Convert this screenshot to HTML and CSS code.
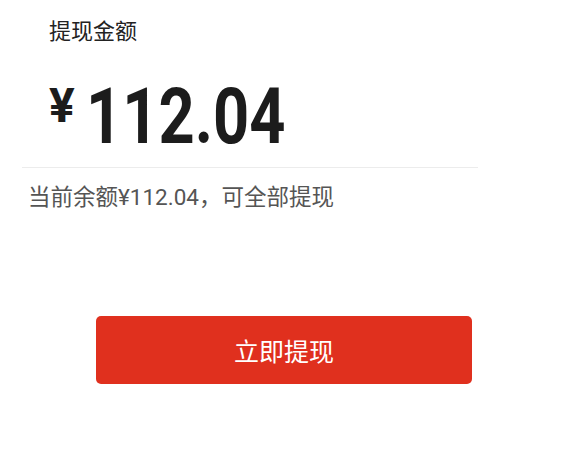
FILE: index.html
```html
<!DOCTYPE html>
<html lang="zh-CN">
<head>
    <meta charset="UTF-8">
    <meta name="viewport" content="width=device-width, initial-scale=1.0">
    <title>提现</title>
    <link rel="stylesheet" href="styles.css">
</head>
<body>
    <section class="withdraw">
        <div class="withdraw-label">提现金额</div>
        <div class="amount">
            <span class="amount-currency">¥</span>
            <span class="amount-value">112.04</span>
        </div>
        <div class="balance">当前余额¥112.04，可全部提现</div>
    </section>

    <div class="actions">
        <button class="submit-btn">立即提现</button>
    </div>
</body>
</html>
```

FILE: styles.css
```css
* {
    margin: 0;
    padding: 0;
    box-sizing: border-box;
    font-family: 'Roboto', 'Noto Sans CJK SC', sans-serif;
}

body {
    background: #fff;
    color: #222;
}

.withdraw {
    padding: 18px 0 0 0;
}

.withdraw-label {
    padding-left: 49px;
    font-size: 22px;
    line-height: 28px;
    color: #222;
}

.amount {
    display: flex;
    align-items: flex-start;
    margin: 0 101px 0 22px;
    padding: 32px 0 11px 27px;
    border-bottom: 1px solid #ececec;
}

.amount-currency {
    font-size: 48px;
    font-weight: bold;
    line-height: 48px;
    margin-top: 4px;
    margin-right: 11px;
    color: #1c1c1c;
}

/* digits in the screenshot are a narrow DIN-like face */
.amount-value {
    display: inline-block;
    font-size: 78px;
    font-weight: bold;
    line-height: 78px;
    color: #1c1c1c;
    transform: scaleX(0.81);
    transform-origin: left center;
}

.balance {
    padding: 13px 0 0 28px;
    font-size: 22.5px;
    line-height: 32px;
    color: #555;
}

.actions {
    padding: 103px 107px 0 96px;
}

.submit-btn {
    display: block;
    width: 100%;
    height: 68px;
    border: none;
    border-radius: 5px;
    background: #e0301e;
    color: #fff;
    font-size: 25px;
    cursor: pointer;
}
```
